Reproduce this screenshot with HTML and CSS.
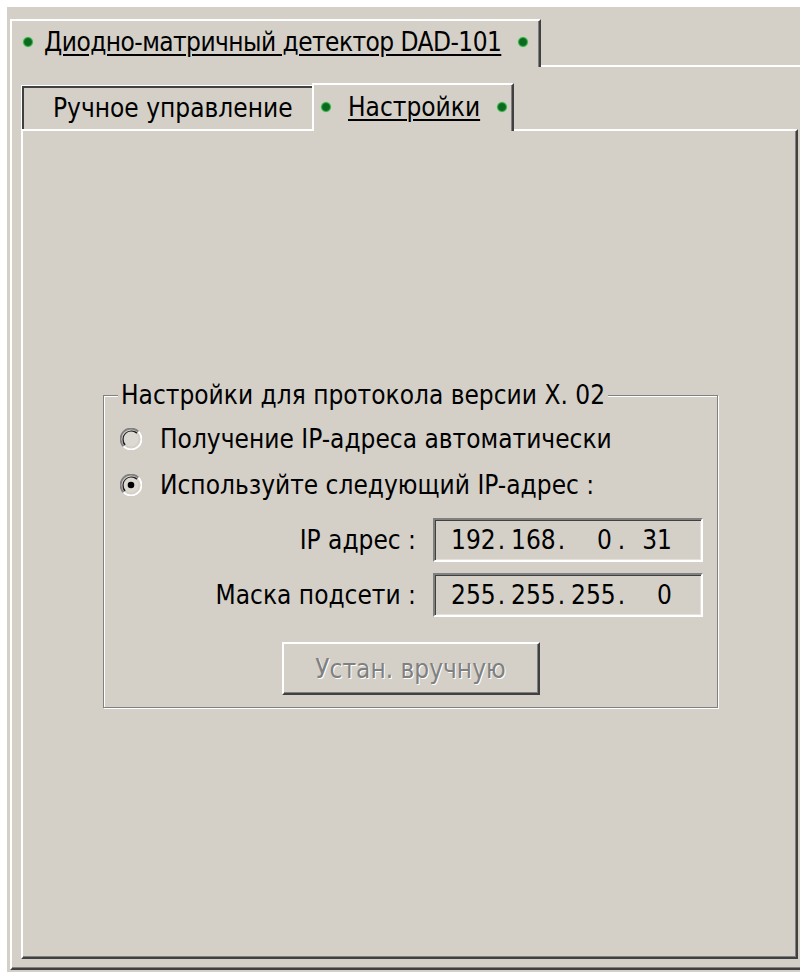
FILE: index.html
```html
<!DOCTYPE html>
<html lang="ru">
<head>
<meta charset="utf-8">
<title>DAD-101 — Настройки</title>
<link rel="stylesheet" href="styles.css">
</head>
<body>
<div class="window">
  <div class="tabset">
    <div class="tabstrip outer-strip">
      <div class="tab tab-current outer-tab">
        <span class="dot"></span>
        <span class="tab-label outer-label">Диодно-матричный детектор DAD-101</span>
        <span class="dot"></span>
      </div>
    </div>
    <div class="panel outer-panel">
      <div class="tabset">
        <div class="tabstrip inner-strip">
          <div class="tab tab-idle">Ручное управление</div>
          <div class="tab tab-current inner-tab">
            <span class="dot"></span>
            <span class="tab-label">Настройки</span>
            <span class="dot"></span>
          </div>
        </div>
        <div class="panel inner-panel">
          <fieldset class="group">
            <legend class="group-title">Настройки для протокола версии X. 02</legend>
            <label class="radio-row">
              <svg class="radio" viewBox="0 0 22 22" width="22" height="22">
                <path d="M3.6 18.4A10.4 10.4 0 0 1 18.4 3.6" fill="none" stroke="#808080" stroke-width="1.8"/>
                <path d="M18.4 3.6A10.4 10.4 0 0 1 3.6 18.4" fill="none" stroke="#ffffff" stroke-width="1.8"/>
                <path d="M5.1 16.9A8.4 8.4 0 0 1 16.9 5.1" fill="none" stroke="#202020" stroke-width="1.8"/>
                <circle cx="11" cy="11" r="7.4" fill="#dcd9d2"/>
              </svg>
              <span>Получение IP-адреса автоматически</span>
            </label>
            <label class="radio-row">
              <svg class="radio" viewBox="0 0 22 22" width="22" height="22">
                <path d="M3.6 18.4A10.4 10.4 0 0 1 18.4 3.6" fill="none" stroke="#808080" stroke-width="1.8"/>
                <path d="M18.4 3.6A10.4 10.4 0 0 1 3.6 18.4" fill="none" stroke="#ffffff" stroke-width="1.8"/>
                <path d="M5.1 16.9A8.4 8.4 0 0 1 16.9 5.1" fill="none" stroke="#202020" stroke-width="1.8"/>
                <circle cx="11" cy="11" r="7.4" fill="#dcd9d2"/>
                <circle cx="11" cy="11" r="3.3" fill="#000"/>
              </svg>
              <span>Используйте следующий IP-адрес :</span>
            </label>
            <div class="addr-grid">
              <span class="addr-label">IP адрес :</span>
              <div class="ip-field">
                <span class="octet">192</span><span class="sep">.</span>
                <span class="octet">168</span><span class="sep">.</span>
                <span class="octet">0</span><span class="sep">.</span>
                <span class="octet">31</span>
              </div>
              <span class="addr-label">Маска подсети :</span>
              <div class="ip-field">
                <span class="octet">255</span><span class="sep">.</span>
                <span class="octet">255</span><span class="sep">.</span>
                <span class="octet">255</span><span class="sep">.</span>
                <span class="octet">0</span>
              </div>
            </div>
            <div class="button-row">
              <button class="btn" disabled>Устан. вручную</button>
            </div>
          </fieldset>
        </div>
      </div>
    </div>
  </div>
</div>
</body>
</html>
```
FILE: styles.css
```css
html, body {
  margin: 0;
  padding: 0;
  background: #ffffff;
  overflow: hidden;
  height: 972px;
}

body {
  font-family: "Liberation Sans Narrow", "DejaVu Sans Condensed", "Liberation Sans", sans-serif;
  font-size: 26px;
  color: #000;
}

.window {
  margin: 7px 0 0 7px;
  width: 830px;
  height: 965px;
  background: #d4d0c8;
  padding: 12px 0 0 3px;
  box-sizing: border-box;
}

/* tab strips */
.tabstrip {
  display: flex;
  align-items: flex-end;
}

.tab {
  box-sizing: border-box;
  display: flex;
  align-items: center;
  background: #d4d0c8;
  white-space: nowrap;
}

.tab-current {
  position: relative;
  z-index: 1;
  margin-bottom: -2px;
  border-top: 2px solid #ffffff;
  border-left: 2px solid #ffffff;
  border-right: 2px solid #404040;
  box-shadow: inset -1px 0 0 #808080;
}

.tab-label {
  text-decoration: underline;
  text-decoration-thickness: 2px;
  text-underline-offset: 3px;
}

.outer-tab {
  height: 48px;
  width: 531px;
  padding: 0 0 4px 10px;
  gap: 10px;
}

.outer-label {
  letter-spacing: -0.55px;
}

.outer-tab .dot:last-child {
  margin-left: 6px;
}

.inner-tab {
  height: 48px;
  width: 202px;
  padding: 0 0 2px 6px;
  gap: 16px;
}

.tab-idle {
  height: 44px;
  width: 291px;
  padding: 0 0 0 31px;
  border-top: 1px solid #ffffff;
  border-left: 1px solid #ffffff;
  box-shadow: inset 2px 2px 0 #404040;
}

.dot {
  flex: none;
  width: 12px;
  height: 12px;
  border-radius: 50%;
  background: radial-gradient(circle, #0c6a20 0, #0c6a20 3.4px, #45b752 4.6px, rgba(150, 220, 150, 0.5) 5.4px, rgba(212, 208, 200, 0) 6px);
}

/* panels */
.panel {
  box-sizing: border-box;
  background: #d4d0c8;
  border-top: 2px solid #ffffff;
  border-left: 2px solid #ffffff;
  border-right: 2px solid #404040;
  border-bottom: 2px solid #404040;
  box-shadow: inset -1px -1px 0 #808080;
}

.outer-panel {
  height: 905px;
  width: 805px;
  padding: 16px 0 0 9px;
}

.inner-panel {
  height: 830px;
  width: 777px;
  padding: 249px 0 0 80px;
}

/* group box */
.group {
  margin: 0;
  width: 615px;
  box-sizing: border-box;
  padding: 6px 0 12px 0;
  border: 1px solid #808080;
  box-shadow: inset 1px 1px 0 #ffffff, 1px 1px 0 #ffffff;
  min-width: 0;
}

.group-title {
  margin-left: 14px;
  padding: 0 3px;
  line-height: 30px;
  background: #d4d0c8;
}

.radio-row {
  display: flex;
  align-items: center;
  height: 46px;
  padding-left: 16px;
  gap: 18px;
}

.radio {
  flex: none;
  display: block;
}

.addr-grid {
  display: grid;
  grid-template-columns: 312px 270px;
  column-gap: 17px;
  row-gap: 11px;
  margin-top: 10px;
  align-items: center;
}

.addr-label {
  text-align: right;
}

.ip-field {
  box-sizing: border-box;
  height: 44px;
  display: flex;
  align-items: center;
  padding-left: 16px;
  background: #d4d0c8;
  border-top: 2px solid #808080;
  border-left: 2px solid #808080;
  border-right: 2px solid #ffffff;
  border-bottom: 2px solid #ffffff;
  box-shadow: inset 1px 1px 0 #404040, inset -1px -1px 0 #e4e1db;
}

.octet {
  width: 41px;
  text-align: right;
}

.sep {
  width: 19px;
  text-align: center;
}

.button-row {
  display: flex;
  justify-content: center;
  margin-top: 25px;
}

.btn {
  box-sizing: border-box;
  width: 258px;
  height: 53px;
  font: inherit;
  color: #808080;
  text-shadow: 1px 1px 0 #ffffff;
  background: #d4d0c8;
  border-top: 2px solid #ffffff;
  border-left: 2px solid #ffffff;
  border-right: 2px solid #404040;
  border-bottom: 2px solid #404040;
  box-shadow: inset -1px -1px 0 #808080;
  padding: 0;
}
```
